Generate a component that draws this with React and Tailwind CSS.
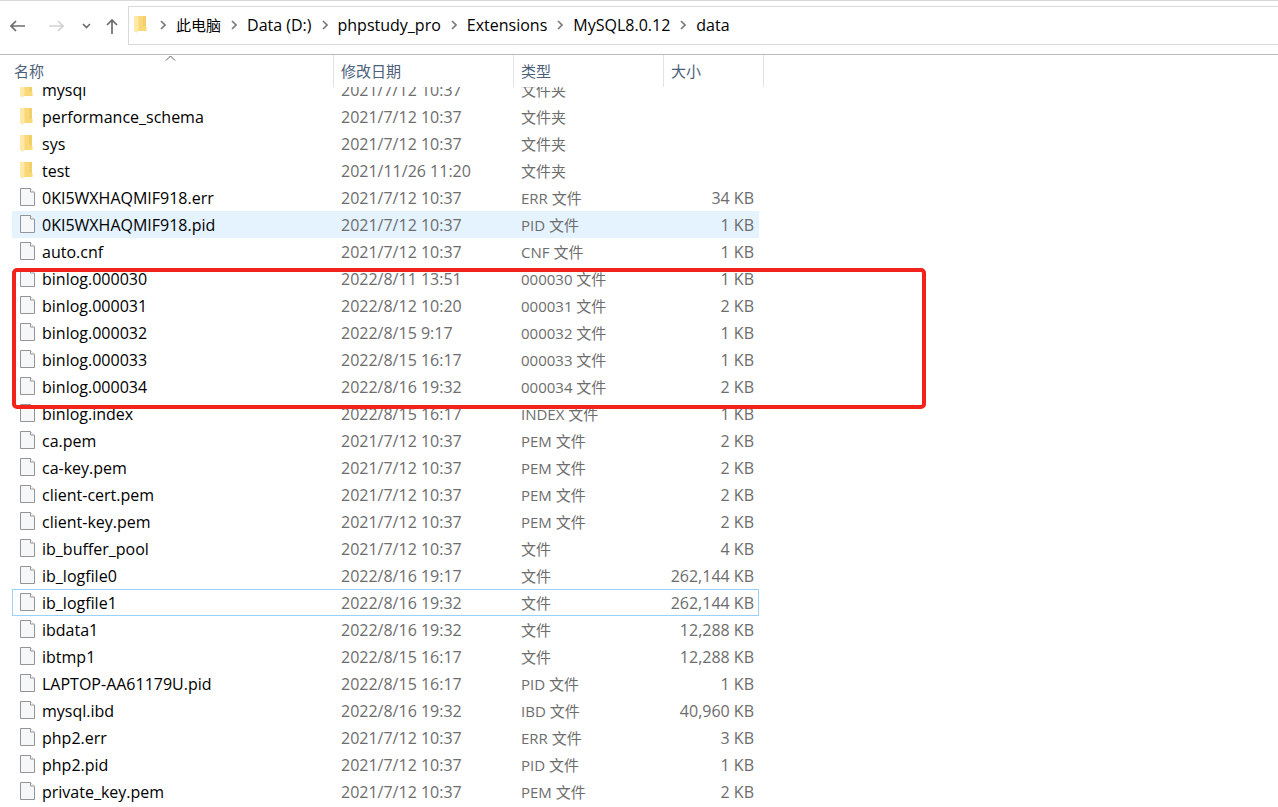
import React, { useLayoutEffect, useRef } from 'react';

const crumbs = ['Data (D:)', 'phpstudy_pro', 'Extensions', 'MySQL8.0.12', 'data'];

const files = [
  { name: 'mysql', date: '2021/7/12 10:37', type: '文件夹', folder: true },
  { name: 'performance_schema', date: '2021/7/12 10:37', type: '文件夹', folder: true },
  { name: 'sys', date: '2021/7/12 10:37', type: '文件夹', folder: true },
  { name: 'test', date: '2021/11/26 11:20', type: '文件夹', folder: true },
  { name: '0KI5WXHAQMIF918.err', date: '2021/7/12 10:37', type: 'ERR 文件', size: '34 KB' },
  { name: '0KI5WXHAQMIF918.pid', date: '2021/7/12 10:37', type: 'PID 文件', size: '1 KB', state: 'hover' },
  { name: 'auto.cnf', date: '2021/7/12 10:37', type: 'CNF 文件', size: '1 KB' },
  { name: 'binlog.000030', date: '2022/8/11 13:51', type: '000030 文件', size: '1 KB' },
  { name: 'binlog.000031', date: '2022/8/12 10:20', type: '000031 文件', size: '2 KB' },
  { name: 'binlog.000032', date: '2022/8/15 9:17', type: '000032 文件', size: '1 KB' },
  { name: 'binlog.000033', date: '2022/8/15 16:17', type: '000033 文件', size: '1 KB' },
  { name: 'binlog.000034', date: '2022/8/16 19:32', type: '000034 文件', size: '2 KB' },
  { name: 'binlog.index', date: '2022/8/15 16:17', type: 'INDEX 文件', size: '1 KB' },
  { name: 'ca.pem', date: '2021/7/12 10:37', type: 'PEM 文件', size: '2 KB' },
  { name: 'ca-key.pem', date: '2021/7/12 10:37', type: 'PEM 文件', size: '2 KB' },
  { name: 'client-cert.pem', date: '2021/7/12 10:37', type: 'PEM 文件', size: '2 KB' },
  { name: 'client-key.pem', date: '2021/7/12 10:37', type: 'PEM 文件', size: '2 KB' },
  { name: 'ib_buffer_pool', date: '2021/7/12 10:37', type: '文件', size: '4 KB' },
  { name: 'ib_logfile0', date: '2022/8/16 19:17', type: '文件', size: '262,144 KB' },
  { name: 'ib_logfile1', date: '2022/8/16 19:32', type: '文件', size: '262,144 KB', state: 'focus' },
  { name: 'ibdata1', date: '2022/8/16 19:32', type: '文件', size: '12,288 KB' },
  { name: 'ibtmp1', date: '2022/8/15 16:17', type: '文件', size: '12,288 KB' },
  { name: 'LAPTOP-AA61179U.pid', date: '2022/8/15 16:17', type: 'PID 文件', size: '1 KB' },
  { name: 'mysql.ibd', date: '2022/8/16 19:32', type: 'IBD 文件', size: '40,960 KB' },
  { name: 'php2.err', date: '2021/7/12 10:37', type: 'ERR 文件', size: '3 KB' },
  { name: 'php2.pid', date: '2021/7/12 10:37', type: 'PID 文件', size: '1 KB' },
  { name: 'private_key.pem', date: '2021/7/12 10:37', type: 'PEM 文件', size: '2 KB' }
];

function FolderIcon() {
  return (
    <svg width="13" height="17" viewBox="0 0 13 17" className="shrink-0" aria-hidden="true">
      <path d="M3 0h9v10.500l.5.5V15H3z" fill="#f8d877" />
      <path d="M9 0h3v10.500H9z" fill="#f3cf69" />
      <path d="M0 0h3l1.500 1v12.500L3 17l-3-2z" fill="#ffe8a8" />
    </svg>
  );
}

function FileIcon() {
  return (
    <svg width="15" height="18" viewBox="0 0 15 18" className="shrink-0" aria-hidden="true">
      <path d="M.5 .5h10l4 4v13H.5z" fill="#f6f7f8" stroke="#929496" />
      <path d="M10.500 .5v3.500h4" fill="#fff" stroke="#929496" />
    </svg>
  );
}

function Chevron() {
  return (
    <svg width="6" height="10" viewBox="0 0 6 10" className="shrink-0" fill="none" stroke="#7a7a7a" strokeWidth="1.6" aria-hidden="true">
      <path d="M1 1l4 4-4 4" />
    </svg>
  );
}

export default function App() {
  const listRef = useRef(null);

  // the list opens slightly scrolled, first row partly under the header
  useLayoutEffect(() => {
    listRef.current.scrollTop = 11;
  }, []);

  const cellState = (state) => {
    if (state === 'hover') return 'border-[#e5f3ff] bg-[#e5f3ff]';
    if (state === 'focus') return 'border-[#99d1ff]';
    return 'border-transparent';
  };

  const thClass = 'sticky top-0 z-10 h-8 bg-white border-r border-[#e2e2e2] p-0 pb-px text-left font-normal text-[#4c607a]';

  return (
    <div className="h-screen flex flex-col overflow-hidden bg-white border-t border-[#d9d9d9] text-[15px] leading-5 text-black font-['Open_Sans','Noto_Sans_CJK_SC',sans-serif]">
      {/* Navigation bar */}
      <header className="flex items-center border-b border-[#bbbbbb] pt-[5px] pb-[9px]">
        <nav className="flex w-32 shrink-0 items-center pl-[10px]" aria-label="导航">
          <button type="button" aria-label="后退" className="w-[34px]">
            <svg width="15" height="12" viewBox="0 0 15 12" fill="none" stroke="#6d6d6d" strokeWidth="1.7">
              <path d="M15 6H1M6 1L1 6l5 5" />
            </svg>
          </button>
          <button type="button" aria-label="前进" className="w-[34px] pl-[5px]" disabled>
            <svg width="15" height="12" viewBox="0 0 15 12" fill="none" stroke="#d2d2d2" strokeWidth="1.7">
              <path d="M0 6h14M9 1l5 5-5 5" />
            </svg>
          </button>
          <button type="button" aria-label="最近" className="w-6 pl-1">
            <svg width="9" height="6" viewBox="0 0 9 6" fill="none" stroke="#6d6d6d" strokeWidth="1.7">
              <path d="M1 1l3.500 3.500L8 1" />
            </svg>
          </button>
          <button type="button" aria-label="上移" className="pl-1">
            <svg width="12" height="16" viewBox="0 0 12 16" fill="none" stroke="#6d6d6d" strokeWidth="1.7">
              <path d="M6 16V2M1 7l5-5 5 5" />
            </svg>
          </button>
        </nav>

        <div className="flex h-[39px] flex-1 items-center border-y border-l border-[#d9d9d9] pl-[5px] pb-[2px]">
          <FolderIcon />
          <ol className="flex items-center whitespace-nowrap pl-[13px]">
            <li className="flex items-center">
              <Chevron />
              <a href="#" className="px-[10px]">此电脑</a>
            </li>
            {crumbs.map((crumb) => (
              <li key={crumb} className="flex items-center">
                <Chevron />
                <a href="#" className="px-[10px] text-[16px]">{crumb}</a>
              </li>
            ))}
          </ol>
        </div>
      </header>

      {/* File list */}
      <main ref={listRef} className="min-h-0 flex-1 overflow-auto [scrollbar-width:none]">
        <div className="relative pl-3 pb-6">
          <table className="w-[752px] table-fixed border-separate border-spacing-0 whitespace-nowrap">
            <colgroup>
              <col className="w-[322px]" />
              <col className="w-[180px]" />
              <col className="w-[150px]" />
              <col className="w-[95px]" />
              <col className="w-[5px]" />
            </colgroup>
            <thead>
              <tr>
                <th scope="col" aria-sort="ascending" className={thClass}>
                  <span className="px-[2px]">名称</span>
                  <svg width="11" height="6" viewBox="0 0 11 6" className="absolute top-0 left-[153px]" fill="none" stroke="#5f5f5f" aria-hidden="true">
                    <path d="M1 5.500L5.500 1 10 5.500" />
                  </svg>
                </th>
                <th scope="col" className={thClass}><span className="px-[7px]">修改日期</span></th>
                <th scope="col" className={thClass}><span className="px-[7px]">类型</span></th>
                <th scope="col" colSpan={2} className={thClass}><span className="px-[7px]">大小</span></th>
              </tr>
            </thead>
            <tbody className="text-[16px] text-[#6d6d6d]">
              {files.map((file) => (
                <tr key={file.name} className="h-[27px]">
                  <td className={`border-y border-l p-0 text-black ${cellState(file.state)}`}>
                    <div className="flex items-center gap-[7px] pl-[7px]">
                      <span className="flex w-[15px] pb-px">{file.folder ? <FolderIcon /> : <FileIcon />}</span>
                      <span>{file.name}</span>
                    </div>
                  </td>
                  <td className={`border-y py-0 px-[7px] ${cellState(file.state)}`}>{file.date}</td>
                  <td className={`border-y py-0 px-[7px] text-[15px] ${cellState(file.state)}`}>{file.type}</td>
                  <td className={`border-y border-r py-0 pr-1 text-right ${cellState(file.state)}`}>{file.size}</td>
                  <td className="p-0"></td>
                </tr>
              ))}
            </tbody>
          </table>

          {/* Marker around the binlog files */}
          <div className="pointer-events-none absolute top-[224px] left-3 h-[141px] w-[914px] rounded-[5px] border-4 border-[#f2231b]"></div>
        </div>
      </main>
    </div>
  );
}
